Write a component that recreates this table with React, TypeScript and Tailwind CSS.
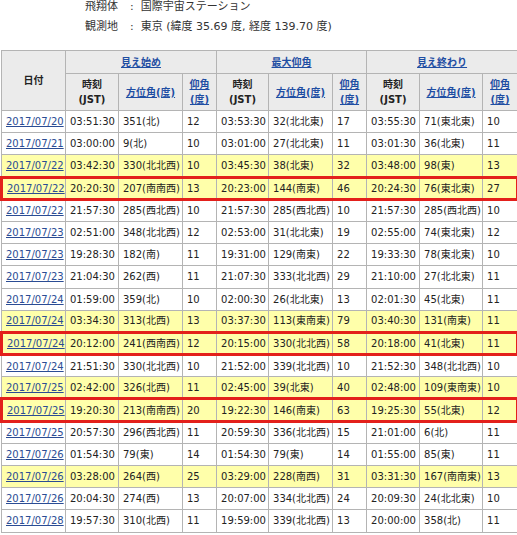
import React from 'react'

type Pass = {
  date: string
  start: [string, string, string]
  peak: [string, string, string]
  end: [string, string, string]
  hi?: boolean
  mark?: boolean
}

const passes: Pass[] = [
  { date: '2017/07/20', start: ['03:51:30', '351(北)', '12'], peak: ['03:53:30', '32(北北東)', '17'], end: ['03:55:30', '71(東北東)', '10'] },
  { date: '2017/07/21', start: ['03:00:00', '9(北)', '10'], peak: ['03:01:00', '27(北北東)', '11'], end: ['03:01:30', '36(北東)', '11'] },
  { date: '2017/07/22', start: ['03:42:30', '330(北北西)', '10'], peak: ['03:45:30', '38(北東)', '32'], end: ['03:48:00', '98(東)', '13'], hi: true },
  { date: '2017/07/22', start: ['20:20:30', '207(南南西)', '13'], peak: ['20:23:00', '144(南東)', '46'], end: ['20:24:30', '76(東北東)', '27'], hi: true, mark: true },
  { date: '2017/07/22', start: ['21:57:30', '285(西北西)', '10'], peak: ['21:57:30', '285(西北西)', '10'], end: ['21:57:30', '285(西北西)', '10'] },
  { date: '2017/07/23', start: ['02:51:00', '348(北北西)', '12'], peak: ['02:53:00', '31(北北東)', '19'], end: ['02:55:00', '74(東北東)', '12'] },
  { date: '2017/07/23', start: ['19:28:30', '182(南)', '11'], peak: ['19:31:00', '129(南東)', '22'], end: ['19:33:30', '78(東北東)', '10'] },
  { date: '2017/07/23', start: ['21:04:30', '262(西)', '11'], peak: ['21:07:30', '333(北北西)', '29'], end: ['21:10:00', '27(北北東)', '11'] },
  { date: '2017/07/24', start: ['01:59:00', '359(北)', '10'], peak: ['02:00:30', '26(北北東)', '13'], end: ['02:01:30', '45(北東)', '11'] },
  { date: '2017/07/24', start: ['03:34:30', '313(北西)', '13'], peak: ['03:37:30', '113(東南東)', '79'], end: ['03:40:30', '131(南東)', '11'], hi: true },
  { date: '2017/07/24', start: ['20:12:00', '241(西南西)', '12'], peak: ['20:15:00', '330(北北西)', '58'], end: ['20:18:00', '41(北東)', '11'], hi: true, mark: true },
  { date: '2017/07/24', start: ['21:51:30', '330(北北西)', '10'], peak: ['21:52:00', '339(北北西)', '10'], end: ['21:52:30', '348(北北西)', '10'] },
  { date: '2017/07/25', start: ['02:42:00', '326(北西)', '11'], peak: ['02:45:00', '39(北東)', '40'], end: ['02:48:00', '109(東南東)', '10'], hi: true },
  { date: '2017/07/25', start: ['19:20:30', '213(南南西)', '20'], peak: ['19:22:30', '146(南東)', '63'], end: ['19:25:30', '55(北東)', '12'], hi: true, mark: true },
  { date: '2017/07/25', start: ['20:57:30', '296(西北西)', '11'], peak: ['20:59:30', '336(北北西)', '15'], end: ['21:01:00', '6(北)', '11'] },
  { date: '2017/07/26', start: ['01:54:30', '79(東)', '14'], peak: ['01:54:30', '79(東)', '14'], end: ['01:55:00', '85(東)', '11'] },
  { date: '2017/07/26', start: ['03:28:00', '264(西)', '25'], peak: ['03:29:00', '228(南西)', '31'], end: ['03:31:30', '167(南南東)', '13'], hi: true },
  { date: '2017/07/26', start: ['20:04:30', '274(西)', '13'], peak: ['20:07:00', '334(北北西)', '24'], end: ['20:09:30', '24(北北東)', '10'] },
  { date: '2017/07/28', start: ['19:57:30', '310(北西)', '11'], peak: ['19:59:00', '339(北北西)', '13'], end: ['20:00:00', '358(北)', '11'] },
]

const th = 'border border-[#b4b4b4] bg-[#ebebeb] font-bold text-center align-middle'
const link = 'text-[#1f4ea3] underline'

const SubHeads = () => (
  <>
    <th className={th}>時刻<br />(JST)</th>
    <th className={th}><a className={link} href="#">方位角(度)</a></th>
    <th className={th}><a className={link} href="#">仰角<br />(度)</a></th>
  </>
)

const App = () => {
  return (
    <div className="w-[517px] h-[535px] overflow-hidden bg-white text-[#222] text-[10px]" style={{ fontFamily: '"DejaVu Sans", "Noto Sans CJK JP", sans-serif' }}>
      <div className="pl-[85px] flex flex-col gap-[6px] leading-[14px] text-[#333] text-[11px] h-[50px]">
        <div className="flex">
          <span className="w-[45px]">飛翔体</span>
          <span>:&nbsp; 国際宇宙ステーション</span>
        </div>
        <div className="flex">
          <span className="w-[45px]">観測地</span>
          <span>:&nbsp; 東京 (緯度 35.69 度, 経度 139.70 度)</span>
        </div>
      </div>
      <table className="w-[516px] table-fixed border-collapse">
        <colgroup>
          <col className="w-[64px]" />
          <col className="w-[53px]" />
          <col className="w-[64px]" />
          <col className="w-[34px]" />
          <col className="w-[52px]" />
          <col className="w-[64px]" />
          <col className="w-[34px]" />
          <col className="w-[53px]" />
          <col className="w-[63px]" />
          <col className="w-[35px]" />
        </colgroup>
        <thead>
          <tr className="h-[23px]">
            <th rowSpan={2} className={th}>日付</th>
            <th colSpan={3} className={th}><a className={link} href="#">見え始め</a></th>
            <th colSpan={3} className={th}><a className={link} href="#">最大仰角</a></th>
            <th colSpan={3} className={th}><a className={link} href="#">見え終わり</a></th>
          </tr>
          <tr className="h-[37px] leading-[15px]">
            <SubHeads />
            <SubHeads />
            <SubHeads />
          </tr>
        </thead>
        <tbody>
          {passes.map((p, i) => {
            const cells = [...p.start, ...p.peak, ...p.end]
            const red = p.mark ? 'border-y-[3px] border-y-[#e3201b]' : ''
            return (
              <tr key={i} className={`h-[22.2px] ${p.hi ? 'bg-[#ffffaa]' : 'bg-white'}`}>
                <td className={`border border-[#b4b4b4] px-[4px] whitespace-nowrap ${red} ${p.mark ? 'border-l-[3px] border-l-[#e3201b]' : ''}`}>
                  <a className="text-[#2b4c94] underline" href="#">{p.date}</a>
                </td>
                {cells.map((c, j) => (
                  <td
                    key={j}
                    className={`border border-[#b4b4b4] px-[4px] whitespace-nowrap ${red} ${p.mark && j === 8 ? 'border-r-[3px] border-r-[#e3201b]' : ''}`}
                  >
                    {c}
                  </td>
                ))}
              </tr>
            )
          })}
        </tbody>
      </table>
    </div>
  )
}

export default App
